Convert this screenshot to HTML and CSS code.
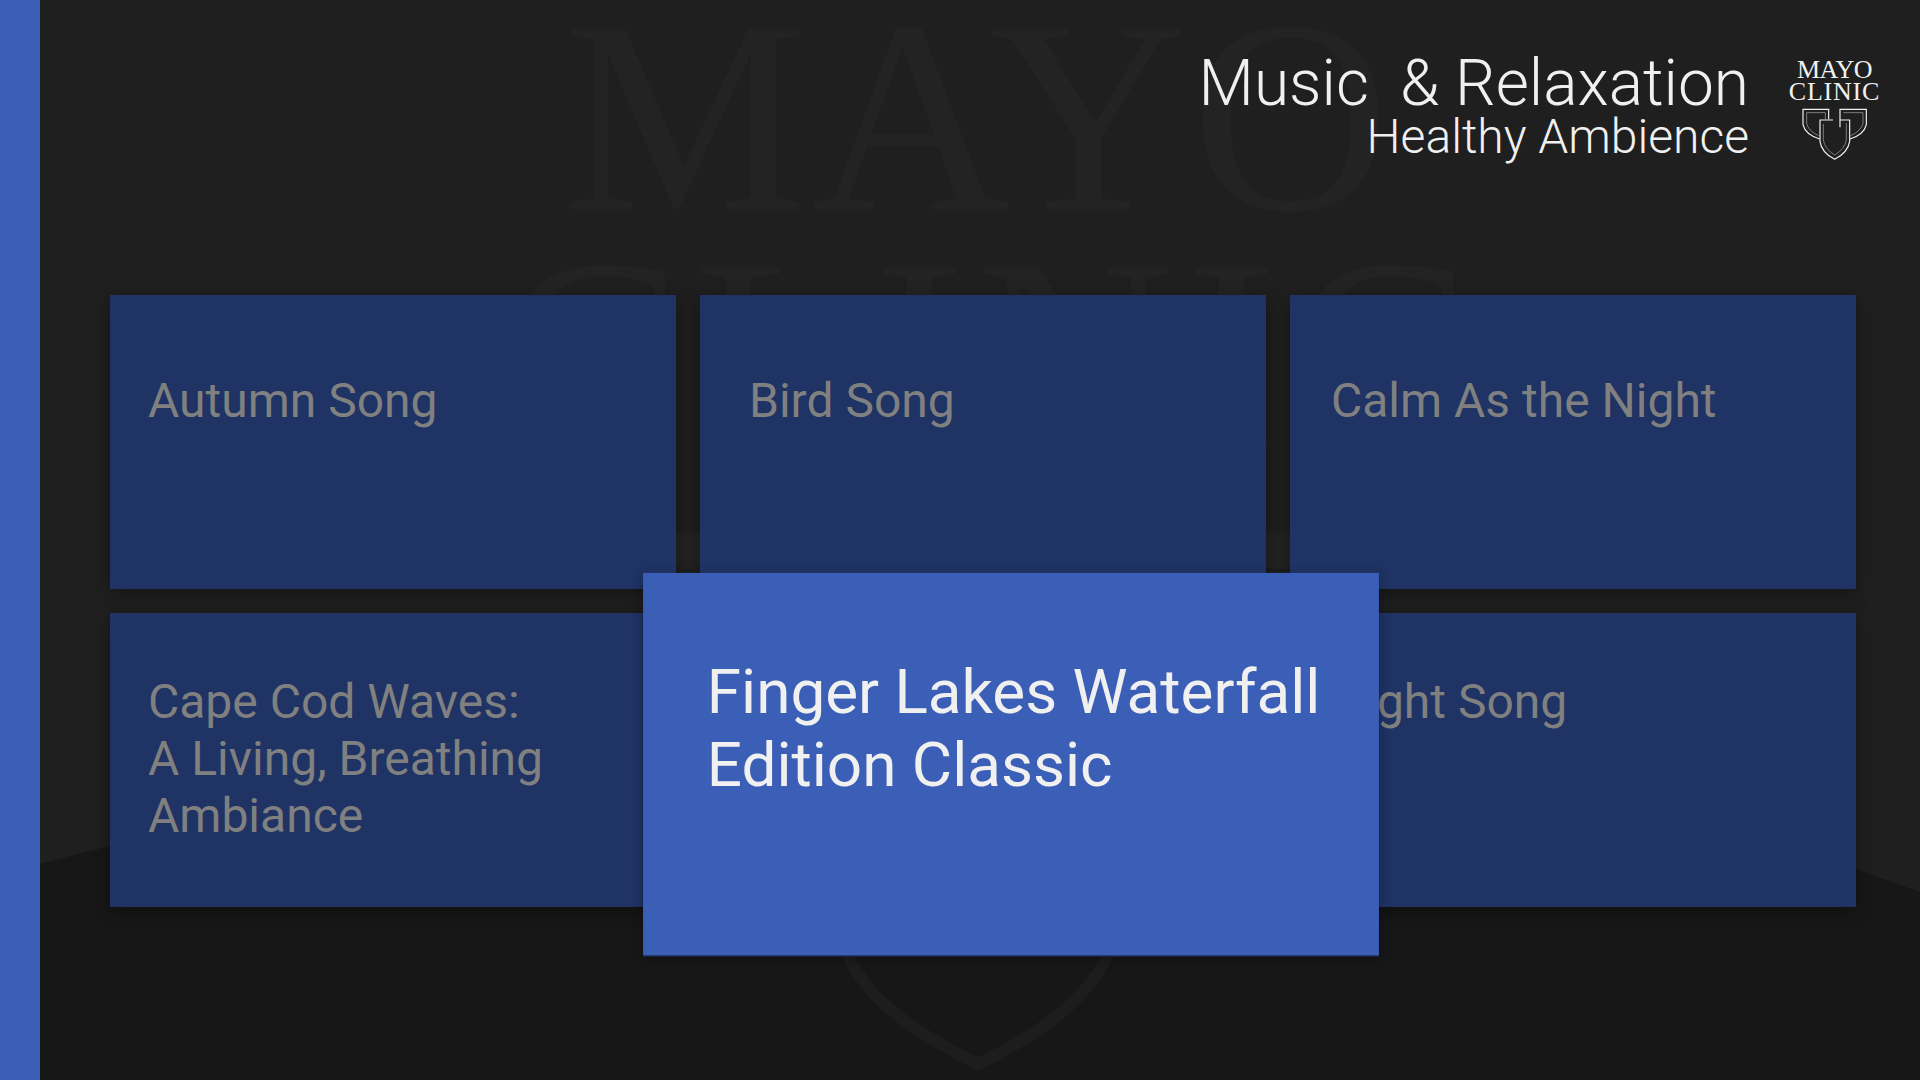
FILE: index.html
```html
<!DOCTYPE html>
<html lang="en">

<head>
    <meta charset="UTF-8" />
    <title>Music &amp; Relaxation</title>
    <link rel="stylesheet" href="styles.css">
</head>

<body>
    <!-- faded logo behind everything -->
    <div class="backdrop">
        <svg class="backdrop-art" viewBox="0 0 1920 1080">
            <path class="floor" d="M0 874L110 846L960 760L1856 869L1920 892V1080H0Z" />
            <rect class="shield-top" x="660" y="533" width="650" height="35" />
            <path class="shield-tip" d="M838 930C855 995 915 1033 978 1064C1041 1033 1100 995 1117 930" />
        </svg>
        <div class="backdrop-mayo">MAYO</div>
        <div class="backdrop-clinic">CLINIC</div>
    </div>

    <div class="rail"></div>

    <div class="screen">
        <header class="header">
            <div class="heading">
                <h1>Music&nbsp; &amp; Relaxation</h1>
                <h2>Healthy Ambience</h2>
            </div>
            <div class="logo">
                <div class="logo-mayo">MAYO</div>
                <div class="logo-clinic">CLINIC</div>
                <svg class="logo-shields" viewBox="0 0 222 180">
                    <path class="inner" d="M26 26H82V46M26 26V58Q30 80 62 95" />
                    <path class="inner" d="M76 60V108Q80 135 110 153Q140 135 145 108V58" />
                    <path class="inner" d="M136 26H195V58Q190 80 158 95" />
                    <path d="M65 105Q22 92 15 62V16H92V46" />
                    <path d="M105 48H66V112Q70 145 110 166Q150 145 155 112V48H126" />
                    <path d="M126 70V16H205V62Q198 92 156 105" />
                </svg>
            </div>
        </header>

        <div class="tiles">
            <div class="tile">Autumn Song</div>
            <div class="tile">Bird Song</div>
            <div class="tile">Calm As the Night</div>
            <div class="tile">Cape Cod Waves:<br>A Living, Breathing<br>Ambiance</div>
            <div class="tile focused">Finger Lakes Waterfall<br>Edition Classic</div>
            <div class="tile">Night Song</div>
        </div>
    </div>
</body>

</html>
```

FILE: styles.css
```css
html,
body {
    overflow: hidden;
}

body {
    margin: 0;
    width: 1920px;
    height: 1080px;
    position: relative;
    display: flex;
    background-color: #1f1f1f;
    font-family: Roboto, sans-serif;
}

.backdrop {
    position: absolute;
    inset: 0;
    overflow: hidden;
    color: #232323;
    font-family: "Liberation Serif", serif;
    font-size: 275px;
    line-height: 1;
}

.backdrop-art {
    position: absolute;
    inset: 0;
    width: 1920px;
    height: 1080px;
}

.floor {
    fill: #171717;
}

.shield-top {
    fill: #232323;
}

.shield-tip {
    fill: none;
    stroke: #1d1d1d;
    stroke-width: 12;
}

.backdrop-mayo {
    position: absolute;
    left: 563px;
    top: -21px;
    letter-spacing: 4px;
}

.backdrop-clinic {
    position: absolute;
    left: 500px;
    top: 217px;
    letter-spacing: 11px;
}

.rail {
    width: 40px;
    flex-shrink: 0;
    background-color: #3b5eb7;
    position: relative;
}

.screen {
    flex: 1;
    position: relative;
}

.header {
    height: 295px;
    box-sizing: border-box;
    padding: 50px 40px 0 0;
    display: flex;
    justify-content: flex-end;
    color: #f0f0f0;
}

.heading {
    text-align: right;
    margin-right: 40px;
}

.heading h1 {
    margin: 1px 0 0;
    font-size: 64px;
    font-weight: 300;
    line-height: 66px;
}

.heading h2 {
    margin: 0;
    font-size: 48px;
    font-weight: 300;
    line-height: 39px;
}

.logo {
    width: 91px;
    padding-top: 8px;
    font-family: "Liberation Serif", serif;
    font-size: 26px;
    line-height: 23px;
    text-align: center;
}

.logo-mayo {
    letter-spacing: -0.5px;
}

.logo-clinic {
    letter-spacing: 0.8px;
    margin: -1px -3px 0;
}

.logo-shields {
    display: block;
    width: 74px;
    height: 60px;
    margin: 1px auto 0;
    fill: none;
    stroke: #f0f0f0;
    stroke-width: 3.5;
}

.logo-shields .inner {
    stroke: #aaaaaa;
    stroke-width: 2;
}

.tiles {
    display: grid;
    grid-template-columns: repeat(3, 566px);
    grid-auto-rows: 294px;
    gap: 24px;
    margin-left: 70px;
}

.tile {
    box-sizing: border-box;
    padding: 60px 0 0 41px;
    background-color: #1f3364;
    color: #808080;
    font-size: 48px;
    line-height: 57px;
    box-shadow: 0 4px 16px rgba(0, 0, 0, 0.35);
}

.tile:nth-child(-n+3) {
    padding-top: 77px;
}

.tile:nth-child(3n+1) {
    padding-left: 38px;
}

.tile:nth-child(3n+2) {
    padding-left: 49px;
}

.focused {
    position: relative;
    z-index: 2;
    padding: 64px 0 0 51px;
    font-size: 47.7px;
    line-height: 56px;
    background-color: #3b5eb7;
    color: #f0f0f0;
    box-shadow: 0 1px 0 #24396f, 0 3px 9px rgba(0, 0, 0, 0.3);
    transform: translate(28px, 4px) scale(1.3);
}
```
